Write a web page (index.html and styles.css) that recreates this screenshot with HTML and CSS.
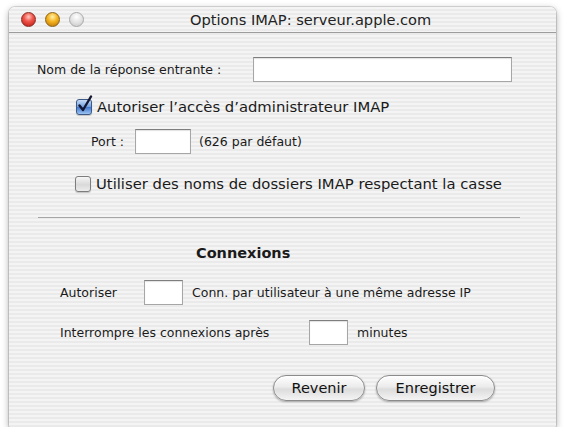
FILE: index.html
```html
<!DOCTYPE html>
<html lang="fr">

<head>
    <meta charset="UTF-8">
    <title>Options IMAP</title>
    <link rel="stylesheet" href="styles.css">
</head>

<body>
    <div class="window">
        <div class="titlebar">
            <div class="lights">
                <span class="light red"></span>
                <span class="light yellow"></span>
                <span class="light off"></span>
            </div>
            <div class="title">Options IMAP: serveur.apple.com</div>
        </div>

        <div class="content">
            <div class="row name-row">
                <label for="replyName">Nom de la réponse entrante :</label>
                <input type="text" id="replyName" class="field name-field">
            </div>

            <label class="check-row admin-row">
                <span class="box checked">
                    <svg width="18" height="20" viewBox="0 0 18 20">
                        <path d="M3.5 10.5 L7 15 L15 1.5" fill="none" stroke="#141833" stroke-width="2.4" stroke-linecap="round" stroke-linejoin="round"/>
                    </svg>
                </span>
                Autoriser l’accès d’administrateur IMAP
            </label>

            <div class="row port-row">
                <span class="port-label">Port :</span>
                <input type="text" class="field port-field">
                <span>(626 par défaut)</span>
            </div>

            <label class="check-row case-row">
                <span class="box"></span>
                Utiliser des noms de dossiers IMAP respectant la casse
            </label>

            <div class="separator"></div>

            <h3 class="section-title">Connexions</h3>

            <div class="row conn-row">
                <span class="conn-label">Autoriser</span>
                <input type="text" class="field small-field">
                <span>Conn. par utilisateur à une même adresse IP</span>
            </div>

            <div class="row timeout-row">
                <span class="timeout-label">Interrompre les connexions après</span>
                <input type="text" class="field small-field">
                <span>minutes</span>
            </div>

            <div class="buttons">
                <button class="pill revert">Revenir</button>
                <button class="pill save">Enregistrer</button>
            </div>
        </div>
    </div>
</body>

</html>
```

FILE: styles.css
```css
body {
    margin: 0;
    background: #ffffff;
    font-family: 'DejaVu Sans', 'Liberation Sans', sans-serif;
    color: #1a1a1a;
}

.window {
    margin: 7px 0 0 9px;
    width: 547px;
    height: 420px;
    border-radius: 6px 6px 2px 2px;
    overflow: hidden;
    background: repeating-linear-gradient(to bottom, #f4f4f4 0, #f4f4f4 2px, #eaeaea 2px, #eaeaea 4px);
    box-shadow: 0 2px 7px rgba(0, 0, 0, 0.35), 0 0 0 1px rgba(0, 0, 0, 0.12);
}

.titlebar {
    height: 25px;
    border-bottom: 1px solid #9c9c9c;
    display: flex;
    align-items: center;
}

.lights {
    display: flex;
    gap: 9px;
    padding-left: 12px;
}

.light {
    width: 15px;
    height: 15px;
    border-radius: 50%;
    box-sizing: border-box;
}

.light.red {
    background: radial-gradient(circle at 50% 30%, #ffc9c2 0, #f0564c 40%, #b8160f 100%);
    border: 1px solid #8a2a24;
}

.light.yellow {
    background: radial-gradient(circle at 50% 30%, #fff1b0 0, #f4b21b 45%, #b56d05 100%);
    border: 1px solid #8a6318;
}

.light.off {
    background: radial-gradient(circle at 50% 30%, #ffffff 0, #e3e3e3 50%, #c4c4c4 100%);
    border: 1px solid #a9a9a9;
}

.title {
    margin-left: 106px;
    font-size: 14.6px;
    color: #222;
}

.content {
    font-size: 12.5px;
}

.row {
    display: flex;
    align-items: center;
}

.field {
    box-sizing: border-box;
    height: 25px;
    margin: 0;
    padding: 0 4px;
    background: #fff;
    border: 1px solid #a6a6a6;
    border-top-color: #7e7e7e;
    box-shadow: inset 0 1px 1px rgba(0, 0, 0, 0.12);
    font: inherit;
}

.name-row {
    margin-top: 24px;
    padding-left: 28px;
}

.name-field {
    width: 259px;
    margin-left: auto;
    margin-right: 44px;
}

.check-row {
    display: flex;
    align-items: center;
    font-size: 14.8px;
    line-height: 16px;
}

.box {
    position: relative;
    box-sizing: border-box;
    width: 16px;
    height: 16px;
    margin-right: 5px;
    border: 1px solid #7d7d7d;
    border-radius: 3px;
    background: linear-gradient(to bottom, #f6f6f6, #d9d9d9 55%, #ececec);
    box-shadow: 0 1px 1px rgba(0, 0, 0, 0.2);
}

.box.checked {
    border-color: #3d5a86;
    background: linear-gradient(to bottom, #c7dcf6, #6f9fe0 50%, #3f78cf 51%, #9cc2f1);
}

.box svg {
    position: absolute;
    left: -1px;
    top: -5px;
}

.admin-row {
    margin-top: 17px;
    padding-left: 67px;
}

.port-row {
    margin-top: 14px;
    padding-left: 82px;
}

.port-label {
    width: 44px;
}

.port-field {
    width: 56px;
    margin-right: 8px;
}

.case-row {
    margin-top: 22px;
    padding-left: 66px;
}

.separator {
    margin: 25px 0 0 29px;
    width: 482px;
    height: 1px;
    background: #a5a5a5;
}

.section-title {
    margin: 27px 0 0;
    padding-left: 187px;
    font-size: 14.5px;
    line-height: 16px;
}

.conn-row {
    margin-top: 19px;
    padding-left: 51px;
}

.conn-label {
    width: 84px;
}

.small-field {
    width: 39px;
    margin-right: 9px;
}

.timeout-row {
    margin-top: 15px;
    padding-left: 51px;
}

.timeout-label {
    width: 249px;
}

.buttons {
    display: flex;
    justify-content: flex-end;
    gap: 11px;
    margin: 30px 61px 0 0;
}

.pill {
    height: 26px;
    padding: 0;
    border: 1px solid #8b8b8b;
    border-radius: 13px;
    background: linear-gradient(to bottom, #fefefe 0, #ececec 45%, #dcdcdc 55%, #f4f4f4 100%);
    box-shadow: 0 1px 2px rgba(0, 0, 0, 0.3), inset 0 1px 2px rgba(255, 255, 255, 0.9);
    font-family: inherit;
    font-size: 14.5px;
    color: #111;
}

.revert {
    width: 92px;
}

.save {
    width: 119px;
}
```
